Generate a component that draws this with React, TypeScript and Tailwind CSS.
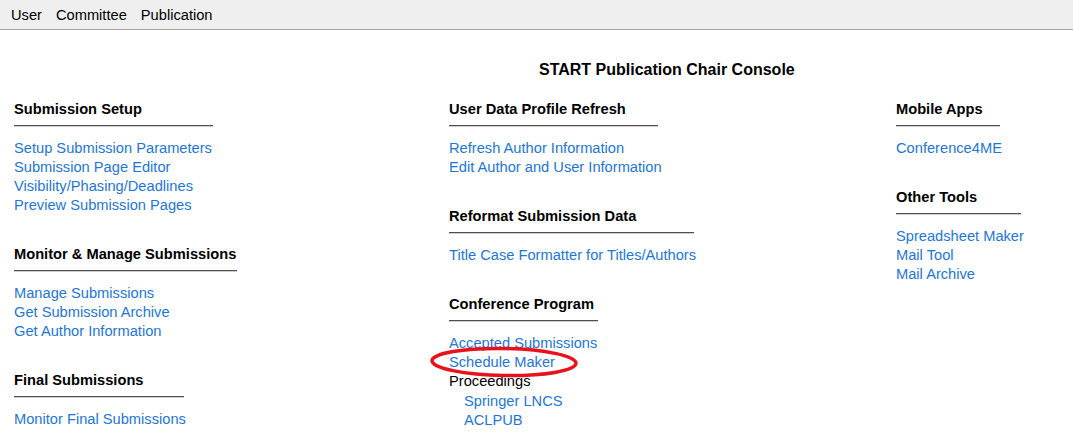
import type { ReactNode } from "react";

type Item = { label: string; href?: boolean; indent?: boolean; circled?: boolean };

type Section = {
  title: string;
  lineWidth: string;
  items: Item[];
};

const columns: Section[][] = [
  [
    {
      title: "Submission Setup",
      lineWidth: "w-[199px]",
      items: [
        { label: "Setup Submission Parameters", href: true },
        { label: "Submission Page Editor", href: true },
        { label: "Visibility/Phasing/Deadlines", href: true },
        { label: "Preview Submission Pages", href: true },
      ],
    },
    {
      title: "Monitor & Manage Submissions",
      lineWidth: "w-[223px]",
      items: [
        { label: "Manage Submissions", href: true },
        { label: "Get Submission Archive", href: true },
        { label: "Get Author Information", href: true },
      ],
    },
    {
      title: "Final Submissions",
      lineWidth: "w-[170px]",
      items: [{ label: "Monitor Final Submissions", href: true }],
    },
  ],
  [
    {
      title: "User Data Profile Refresh",
      lineWidth: "w-[209px]",
      items: [
        { label: "Refresh Author Information", href: true },
        { label: "Edit Author and User Information", href: true },
      ],
    },
    {
      title: "Reformat Submission Data",
      lineWidth: "w-[245px]",
      items: [{ label: "Title Case Formatter for Titles/Authors", href: true }],
    },
    {
      title: "Conference Program",
      lineWidth: "w-[149px]",
      items: [
        { label: "Accepted Submissions", href: true },
        { label: "Schedule Maker", href: true, circled: true },
        { label: "Proceedings" },
        { label: "Springer LNCS", href: true, indent: true },
        { label: "ACLPUB", href: true, indent: true },
      ],
    },
  ],
  [
    {
      title: "Mobile Apps",
      lineWidth: "w-[104px]",
      items: [{ label: "Conference4ME", href: true }],
    },
    {
      title: "Other Tools",
      lineWidth: "w-[125px]",
      items: [
        { label: "Spreadsheet Maker", href: true },
        { label: "Mail Tool", href: true },
        { label: "Mail Archive", href: true },
      ],
    },
  ],
];

function Circled({ children }: { children: ReactNode }) {
  return (
    <span className="relative inline-block">
      {children}
      {/* red hand-drawn annotation */}
      <svg
        className="pointer-events-none absolute left-[-20px] top-[-7px]"
        width="152"
        height="32"
        viewBox="0 0 152 32"
      >
        <ellipse
          cx="75"
          cy="16"
          rx="72"
          ry="13.5"
          fill="none"
          stroke="#e8121c"
          strokeWidth="3.5"
          transform="rotate(1 75 16)"
        />
      </svg>
    </span>
  );
}

function SectionBlock({ section }: { section: Section }) {
  return (
    <div className="mb-[29px]">
      <h3 className="text-[14.67px] font-bold leading-[20px] text-black">{section.title}</h3>
      <div
        className={`${section.lineWidth} mt-[6px] h-[2px] border-t border-b border-t-[#4f4f4f] border-b-[#cfcfcf]`}
      />
      <ul className="mt-[12px]">
        {section.items.map((item, idx) => {
          const text = item.href ? (
            <a href="#" className="text-[#1f76d1]">
              {item.label}
            </a>
          ) : (
            <span className="text-black">{item.label}</span>
          );
          const firstIndent = item.indent && !section.items[idx - 1]?.indent;
          return (
            <li
              key={item.label}
              className={`text-[14.67px] leading-[19px] ${item.indent ? "pl-[15px]" : ""} ${firstIndent ? "mt-[1px]" : ""}`}
            >
              {item.circled ? <Circled>{text}</Circled> : text}
            </li>
          );
        })}
      </ul>
    </div>
  );
}

export default function App() {
  return (
    <div className="h-[448px] w-[1073px] overflow-hidden bg-white font-['Liberation_Sans',Arial,sans-serif] text-black">
      <nav className="flex h-[30px] items-center border-b border-[#a3a39b] bg-[#efefef] pl-[4px] pt-[1px] text-[14.67px]">
        <span className="px-[7px]">User</span>
        <span className="px-[7px]">Committee</span>
        <span className="px-[7px]">Publication</span>
      </nav>

      <h1 className="mt-[30px] pl-[539px] text-[16px] font-bold leading-[20px]">
        START Publication Chair Console
      </h1>

      <div className="mt-[19px] grid grid-cols-[435px_447px_1fr] pl-[14px]">
        {columns.map((col, i) => (
          <div key={i}>
            {col.map((s) => (
              <SectionBlock key={s.title} section={s} />
            ))}
          </div>
        ))}
      </div>
    </div>
  );
}
